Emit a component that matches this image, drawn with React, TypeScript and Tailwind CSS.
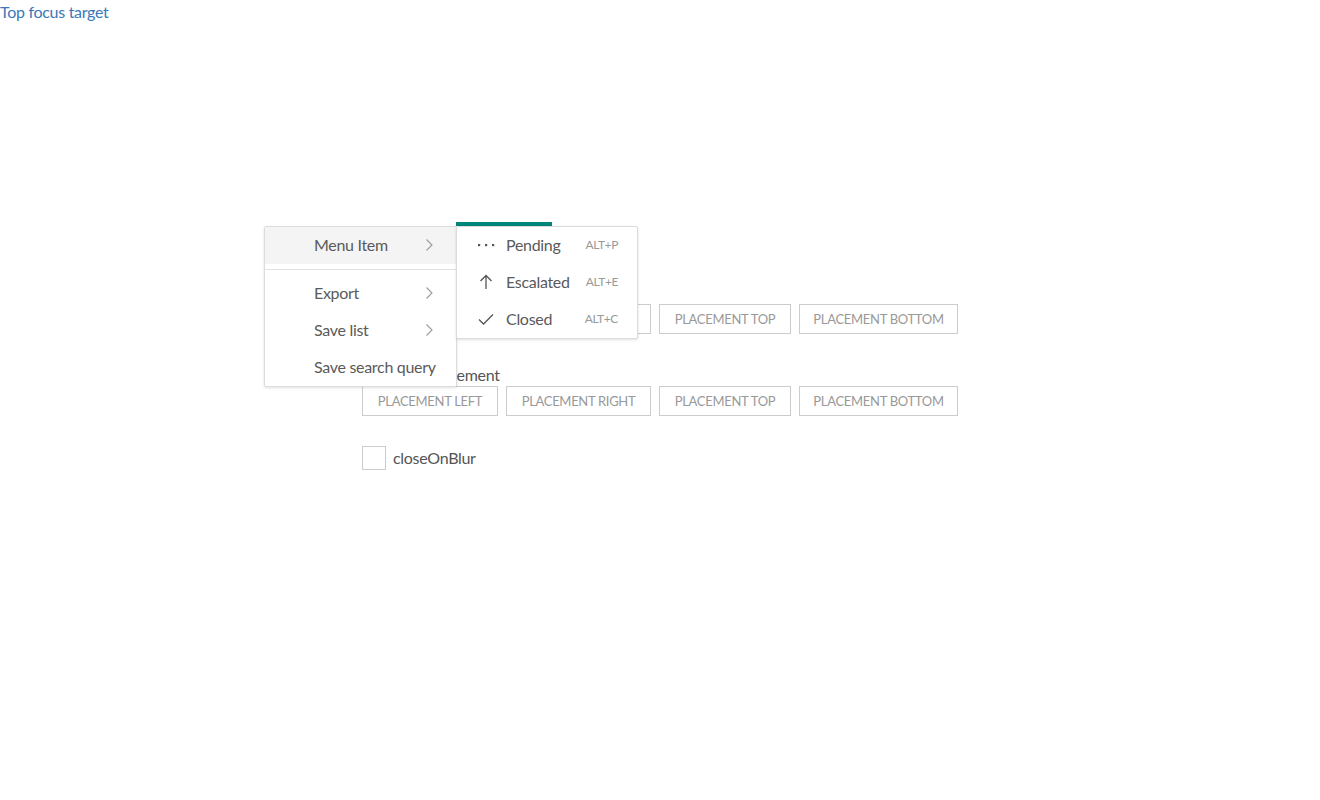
import React from "react";

const font = { fontFamily: "Lato, 'Liberation Sans', sans-serif" };

const Chevron = () => (
  <svg width="10" height="14" viewBox="0 0 10 14" className="text-[#9a9a9a]">
    <path d="M2.5 1.5 L8 7 L2.5 12.5" fill="none" stroke="currentColor" strokeWidth="1.1" />
  </svg>
);

const Dots = () => (
  <svg width="18" height="18" viewBox="0 0 18 18" className="text-[#555]">
    <rect x="1" y="8" width="2.2" height="2.2" fill="currentColor" />
    <rect x="8" y="8" width="2.2" height="2.2" fill="currentColor" />
    <rect x="15" y="8" width="2.2" height="2.2" fill="currentColor" />
  </svg>
);

const ArrowUp = () => (
  <svg width="18" height="18" viewBox="0 0 18 18" className="text-[#555]">
    <path d="M9 16 V2.5 M3.5 8 L9 2.5 L14.5 8" fill="none" stroke="currentColor" strokeWidth="1.3" />
  </svg>
);

const Check = () => (
  <svg width="18" height="18" viewBox="0 0 18 18" className="text-[#555]">
    <path d="M2 9.5 L6.5 14 L16 4.5" fill="none" stroke="currentColor" strokeWidth="1.3" />
  </svg>
);

const placements = [
  { title: "Placement left", w: "w-[136px]" },
  { title: "Placement right", w: "w-[145px]" },
  { title: "Placement top", w: "w-[132px]" },
  { title: "Placement bottom", w: "w-[159px]" },
];

const ButtonRow = () => (
  <div className="flex gap-2">
    {placements.map((p) => (
      <button
        key={p.title}
        className={`${p.w} h-[30px] border border-[#cccccc] bg-white text-[13px] tracking-[-0.3px] uppercase text-[#999] leading-none whitespace-nowrap`}
      >
        {p.title}
      </button>
    ))}
  </div>
);

const menuItems = [
  { title: "Export", sub: true },
  { title: "Save list", sub: true },
  { title: "Save search query", sub: false },
];

const subItems = [
  { title: "Pending", key: "ALT+P", icon: <Dots /> },
  { title: "Escalated", key: "ALT+E", icon: <ArrowUp /> },
  { title: "Closed", key: "ALT+C", icon: <Check /> },
];

export default function App() {
  return (
    <div className="relative min-h-[800px] bg-white tracking-[-0.3px]" style={font}>
      <a href="#" className="text-[16px] leading-[22px] text-[#3a78b8]">
        Top focus target
      </a>

      <div className="ml-[362px] mt-[258px] text-[16px] text-[#555]">
        <div className="leading-[22px]">Menu placement</div>
        <ButtonRow />
        <div className="mt-[30px] leading-[22px]">Submenu placement</div>
        <ButtonRow />
        <label className="mt-[30px] flex items-center gap-[7px]">
          <span className="w-6 h-6 border border-[#cccccc] bg-white" />
          <span className="text-[16px] text-[#555]">closeOnBlur</span>
        </label>
      </div>

      {/* teal focus bar */}
      <div className="absolute left-[456px] top-[222px] w-[96px] h-1 bg-[#00857a]" />

      {/* Menu */}
      <div className="absolute left-[264px] top-[226px] w-[193px] bg-white border border-[#dcdcdc] rounded-[2px] shadow-[0_1px_3px_rgba(0,0,0,0.12)] text-[16px] text-[#5a5a5a]">
        <div className="flex items-center justify-between h-[37px] pl-[49px] pr-[22px] pb-[2px] bg-[#f4f4f4]">
          <span>Menu Item</span>
          <Chevron />
        </div>
        <div className="my-[5px] h-px bg-[#e2e2e2]" />
        {menuItems.map((item) => (
          <div key={item.title} className="flex items-center justify-between h-[37px] pl-[49px] pr-[22px] pb-[2px]">
            <span className="whitespace-nowrap">{item.title}</span>
            {item.sub && <Chevron />}
          </div>
        ))}
      </div>

      {/* Submenu */}
      <div className="absolute left-[456px] top-[226px] w-[182px] bg-white border border-[#dcdcdc] rounded-[2px] shadow-[0_1px_3px_rgba(0,0,0,0.12)] text-[16px] text-[#5a5a5a]">
        {subItems.map((item) => (
          <div key={item.title} className="flex items-center h-[37px] pl-[20px] pr-[19px] pb-[2px]">
            <span className="w-[29px] flex">{item.icon}</span>
            <span className="flex-1">{item.title}</span>
            <span className="text-[12px] text-[#999] tracking-[-0.4px]">{item.key}</span>
          </div>
        ))}
      </div>
    </div>
  );
}
